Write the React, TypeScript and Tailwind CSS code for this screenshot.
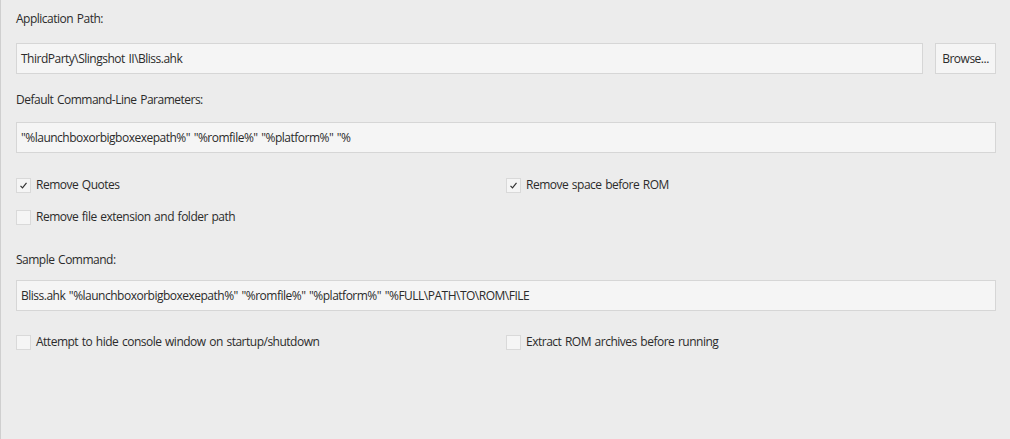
import React from "react";

function Check({ checked, label }: { checked?: boolean; label: string }) {
  return (
    <label className="flex items-center gap-[5px] h-4">
      <span className="w-[15px] h-[15px] border border-[#d9d9d9] bg-[#f5f5f5] flex items-center justify-center">
        {checked && (
          <svg width="9" height="9" viewBox="0 0 9 9" fill="none">
            <polyline points="1.5,4.8 3.5,6.8 7.5,1.8" stroke="#333" strokeWidth="1.2" />
          </svg>
        )}
      </span>
      <span>{label}</span>
    </label>
  );
}

function Field({ value }: { value: string }) {
  return (
    <div className="h-[31px] flex-1 border border-[#d6d6d6] bg-[#f5f5f5] flex items-center px-[4px] whitespace-nowrap overflow-hidden">
      {value}
    </div>
  );
}

export default function App() {
  return (
    <div
      className="w-[1010px] h-[439px] bg-[#ececec] border-l border-[#cfcfcf] text-[#2b2b2b] text-[12px] tracking-[-0.5px] [word-spacing:1px] pl-[15px] pr-[14px] pt-[10px]"
      style={{ fontFamily: '"Open Sans", "Noto Sans", sans-serif' }}
    >
      <div className="h-[17px] flex items-center">Application Path:</div>
      <div className="flex gap-[12px] mt-[16px]">
        <Field value="ThirdParty\Slingshot II\Bliss.ahk" />
        <button className="w-[61px] h-[31px] border border-[#d6d6d6] bg-[#f5f5f5]">Browse...</button>
      </div>
      <div className="h-[17px] flex items-center mt-[17px]">Default Command-Line Parameters:</div>
      <div className="flex mt-[14px]">
        <Field value={'"%launchboxorbigboxexepath%" "%romfile%" "%platform%" "%'} />
      </div>
      <div className="grid grid-cols-2 mt-[24px] gap-y-[16px]">
        <Check checked label="Remove Quotes" />
        <Check checked label="Remove space before ROM" />
        <Check label="Remove file extension and folder path" />
      </div>
      <div className="h-[17px] flex items-center mt-[26px]">Sample Command:</div>
      <div className="flex mt-[12px]">
        <Field value={'Bliss.ahk "%launchboxorbigboxexepath%" "%romfile%" "%platform%" "%FULL\\PATH\\TO\\ROM\\FILE'} />
      </div>
      <div className="grid grid-cols-2 mt-[23px]">
        <Check label="Attempt to hide console window on startup/shutdown" />
        <Check label="Extract ROM archives before running" />
      </div>
    </div>
  );
}
